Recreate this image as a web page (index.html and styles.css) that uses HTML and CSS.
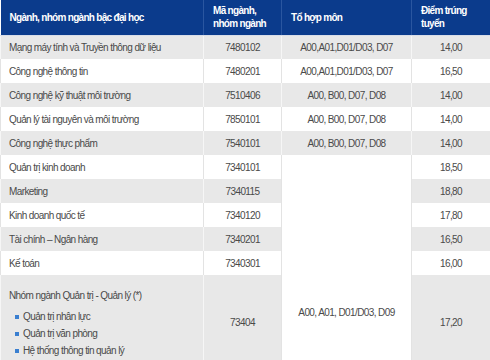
FILE: index.html
```html
<!DOCTYPE html>
<html lang="vi">
<head>
<meta charset="UTF-8">
<meta name="viewport" content="width=device-width, initial-scale=1.0">
<title>Điểm trúng tuyển</title>
<link rel="stylesheet" href="styles.css">
</head>
<body>

<table class="score-table">
    <colgroup>
        <col class="col-name">
        <col class="col-code">
        <col class="col-combo">
        <col class="col-score">
    </colgroup>
    <thead>
        <tr>
            <th>Ngành, nhóm ngành bậc đại học</th>
            <th>Mã ngành,<br>nhóm ngành</th>
            <th>Tổ hợp môn</th>
            <th>Điểm trúng<br>tuyển</th>
        </tr>
    </thead>
    <tbody>
        <tr class="row-grey">
            <td>Mạng máy tính và Truyền thông dữ liệu</td>
            <td class="center">7480102</td>
            <td class="center">A00,A01,D01/D03, D07</td>
            <td class="center">14,00</td>
        </tr>
        <tr>
            <td>Công nghệ thông tin</td>
            <td class="center">7480201</td>
            <td class="center">A00,A01,D01/D03, D07</td>
            <td class="center">16,50</td>
        </tr>
        <tr class="row-grey">
            <td>Công nghệ kỹ thuật môi trường</td>
            <td class="center">7510406</td>
            <td class="center">A00, B00, D07, D08</td>
            <td class="center">14,00</td>
        </tr>
        <tr>
            <td>Quản lý tài nguyên và môi trường</td>
            <td class="center">7850101</td>
            <td class="center">A00, B00, D07, D08</td>
            <td class="center">14,00</td>
        </tr>
        <tr class="row-grey">
            <td>Công nghệ thực phẩm</td>
            <td class="center">7540101</td>
            <td class="center">A00, B00, D07, D08</td>
            <td class="center">14,00</td>
        </tr>
        <tr>
            <td>Quản trị kinh doanh</td>
            <td class="center">7340101</td>
            <td class="center combo-span" rowspan="6">A00, A01, D01/D03, D09</td>
            <td class="center">18,50</td>
        </tr>
        <tr class="row-grey">
            <td>Marketing</td>
            <td class="center">7340115</td>
            <td class="center">18,80</td>
        </tr>
        <tr>
            <td>Kinh doanh quốc tế</td>
            <td class="center">7340120</td>
            <td class="center">17,80</td>
        </tr>
        <tr class="row-grey">
            <td>Tài chính – Ngân hàng</td>
            <td class="center">7340201</td>
            <td class="center">16,50</td>
        </tr>
        <tr>
            <td>Kế toán</td>
            <td class="center">7340301</td>
            <td class="center">16,00</td>
        </tr>
        <tr class="row-grey row-group">
            <td class="group-cell">
                <p class="group-title">Nhóm ngành Quản trị - Quản lý (*)</p>
                <ul class="group-list">
                    <li>Quản trị nhân lực</li>
                    <li>Quản trị văn phòng</li>
                    <li>Hệ thống thông tin quản lý</li>
                </ul>
            </td>
            <td class="center">73404</td>
            <td class="center">17,20</td>
        </tr>
    </tbody>
</table>

</body>
</html>
```

FILE: styles.css
```css
body {
    margin: 0;
    padding: 0;
    background: #fff;
    font-family: "Liberation Sans", Arial, sans-serif;
    font-size: 10px;
    letter-spacing: -0.6px;
    color: #4a4a4a;
}
.score-table {
    width: 490px;
    border-collapse: collapse;
    table-layout: fixed;
}
.col-name {
    width: 203px;
}
.col-code {
    width: 78px;
}
.col-combo {
    width: 130px;
}
.col-score {
    width: 79px;
}
.score-table th {
    background-color: #0b3b8c;
    color: #fff;
    font-weight: bold;
    text-align: left;
    height: 35px;
    padding: 0 8px 0 9px;
    line-height: 13px;
    letter-spacing: -0.7px;
    border-right: 1px solid #2a56a0;
    border-bottom: 1px solid #d8dde8;
    box-sizing: border-box;
}
.score-table th:last-child {
    border-right: none;
}
.score-table td {
    height: 24px;
    padding: 0 8px;
    border: 1px solid #e3e3e3;
    border-top: none;
    border-bottom: none;
    box-sizing: border-box;
    vertical-align: middle;
}
.score-table td.center {
    text-align: center;
}
.row-grey td {
    background-color: #e8e8e8;
    border-color: #f6f6f6;
}
.row-grey td.combo-span {
    background-color: #fff;
}
.score-table td.combo-span {
    padding-top: 100px;
}
.row-group td {
    height: 95px;
}
.score-table td.group-cell {
    vertical-align: top;
    padding-top: 14px;
}
.group-title {
    margin: 0 0 5px 0;
    line-height: 14px;
}
.group-list {
    margin: 0;
    padding: 0 0 0 14px;
    list-style: none;
}
.group-list li {
    position: relative;
    line-height: 17px;
}
.group-list li::before {
    content: "";
    position: absolute;
    left: -8px;
    top: 7px;
    width: 4px;
    height: 4px;
    background-color: #3a7fd0;
}
```
